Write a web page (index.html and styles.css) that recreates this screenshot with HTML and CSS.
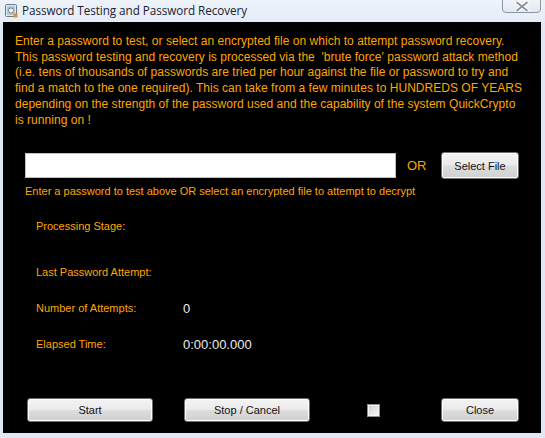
FILE: index.html
```html
<!DOCTYPE html>
<html>
<head>
<meta charset="utf-8">
<link rel="stylesheet" href="styles.css">
</head>
<body>
<div class="window">
  <div class="titlebar">
    <svg class="appicon" width="15" height="15" viewBox="0 0 15 15">
      <rect x="1.5" y="1.5" width="11" height="12" rx="1" fill="#dfe6ee" stroke="#6d7a88"/>
      <rect x="3" y="3" width="8" height="9" fill="#b9c6d4"/>
      <circle cx="7" cy="7.5" r="2.6" fill="#f4f7fa" stroke="#5a6a7c" stroke-width="0.8"/>
      <rect x="9.5" y="10.5" width="4" height="4" fill="#e0902a"/>
    </svg>
    <span class="title">Password Testing and Password Recovery</span>
    <div class="closebtn">
      <svg width="16" height="11" viewBox="0 0 16 11">
        <path d="M3 1.5 L13 9.5 M13 1.5 L3 9.5" stroke="#fff" stroke-width="3.6" stroke-linecap="round"/>
        <path d="M3 1.5 L13 9.5 M13 1.5 L3 9.5" stroke="#878e98" stroke-width="1.7" stroke-linecap="round"/>
      </svg>
    </div>
  </div>
  <div class="client">
    <p class="intro">Enter a password to test, or select an encrypted file on which to attempt password recovery.<br>This password testing and recovery is processed via the&nbsp; 'brute force' password attack method<br>(i.e. tens of thousands of passwords are tried per hour against the file or password to try and<br>find a match to the one required). This can take from a few minutes to HUNDREDS OF YEARS<br>depending on the strength of the password used and the capability of the system QuickCrypto<br>is running on !</p>
    <div class="inputrow">
      <input class="pwd" type="text">
      <span class="or">OR</span>
      <button class="btn selectbtn">Select File</button>
    </div>
    <div class="hint">Enter a password to test above OR select an encrypted file to attempt to decrypt</div>
    <div class="stats">
      <div class="row r1"><span class="label">Processing Stage:</span><span class="value"></span></div>
      <div class="row r2"><span class="label">Last Password Attempt:</span><span class="value"></span></div>
      <div class="row r3"><span class="label">Number of Attempts:</span><span class="value">0</span></div>
      <div class="row r4"><span class="label">Elapsed Time:</span><span class="value">0:00:00.000</span></div>
    </div>
    <div class="buttons">
      <button class="btn wide startbtn">Start</button>
      <button class="btn wide stopbtn">Stop / Cancel</button>
      <span class="check"></span>
      <button class="btn closebutton">Close</button>
    </div>
  </div>
</div>
</body>
</html>
```
FILE: styles.css
```css
html, body {
  margin: 0;
  padding: 0;
  background: #dde7f3;
}
.window {
  width: 545px;
  height: 438px;
  background: #dfe8f4;
  display: flex;
  flex-direction: column;
  overflow: hidden;
}
.titlebar {
  height: 22px;
  display: flex;
  align-items: center;
  position: relative;
  background: linear-gradient(#eef3fa, #e4ecf7);
}
.appicon {
  margin-left: 4px;
  margin-top: -2px;
}
.title {
  margin-left: 3px;
  margin-top: -3px;
  font-family: "Open Sans", "Noto Sans", sans-serif;
  font-size: 11.7px;
  color: #1a2230;
  letter-spacing: -0.05px;
}
.closebtn {
  position: absolute;
  left: 502px;
  top: -4px;
  width: 39px;
  height: 17px;
  border: 1px solid #8d96a3;
  border-radius: 0 0 4px 4px;
  background: linear-gradient(#f4f7fb, #e3e9f1);
  display: flex;
  align-items: center;
  justify-content: center;
  padding-top: 3px;
  box-sizing: border-box;
}
.client {
  margin: 0 4px 0 3px;
  height: 411px;
  background: #000;
  box-sizing: border-box;
  padding: 12px 12px 0 12px;
  font-family: "Liberation Sans", Arial, sans-serif;
  color: #ffa500;
  display: flex;
  flex-direction: column;
}
.intro {
  margin: 0;
  font-size: 12px;
  line-height: 15.7px;
  white-space: nowrap;
  letter-spacing: 0.03px;
}
.inputrow {
  display: flex;
  align-items: center;
  margin-top: 24px;
  margin-left: 10px;
  height: 27px;
}
.pwd {
  width: 371px;
  height: 25px;
  box-sizing: border-box;
  border: 1px solid #b8c2d2;
  background: #fff;
  margin: 0;
  padding: 0;
  outline: none;
}
.or {
  margin-left: 11px;
  font-size: 13px;
  width: 23px;
}
.btn {
  font-family: "Liberation Sans", Arial, sans-serif;
  font-size: 11px;
  color: #111;
  border: 1px solid #707070;
  border-radius: 3px;
  background: linear-gradient(#f3f3f3 0%, #ebebeb 48%, #dddddd 52%, #d0d0d0 100%);
  box-shadow: inset 0 0 0 1px #fcfcfc;
  padding: 0;
  margin: 0;
}
.selectbtn {
  margin-left: 11px;
  width: 78px;
  height: 27px;
}
.hint {
  margin-top: 6px;
  margin-left: 10px;
  font-size: 11px;
  line-height: 13px;
}
.stats {
  margin-left: 21px;
  margin-top: 20px;
  display: flex;
  flex-direction: column;
}
.row {
  display: grid;
  grid-template-columns: 147px auto;
  align-items: center;
  height: 16px;
}
.r2 { margin-top: 30px; }
.r3 { margin-top: 20px; }
.r4 { margin-top: 20px; }
.label {
  font-size: 11px;
}
.value {
  font-size: 13px;
  color: #ececec;
}
.buttons {
  display: flex;
  align-items: center;
  margin-top: 46px;
  margin-left: 12px;
  height: 24px;
}
.wide {
  width: 126px;
  height: 24px;
}
.stopbtn {
  margin-left: 31px;
}
.check {
  width: 13px;
  height: 13px;
  box-sizing: border-box;
  border: 1px solid #8e8f8f;
  background: linear-gradient(135deg, #cbcfd5, #f6f6f6);
  box-shadow: inset 0 0 0 1px #f4f4f4;
  margin-left: 57px;
  margin-top: 1px;
}
.closebutton {
  margin-left: 61px;
  width: 78px;
  height: 24px;
}
```
